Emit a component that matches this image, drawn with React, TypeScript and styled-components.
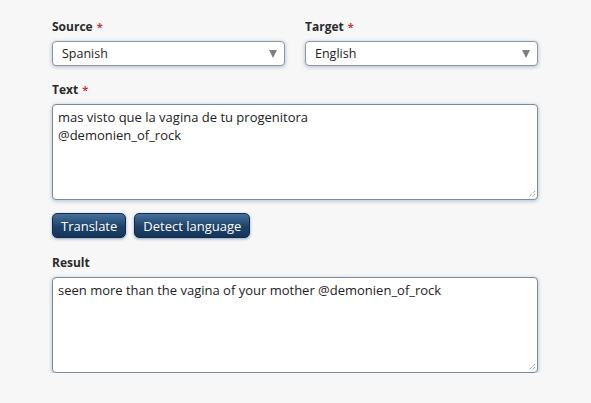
import React from "react";
import styled, { createGlobalStyle } from "styled-components";

const Global = createGlobalStyle`
  html, body { margin: 0; padding: 0; background: #f7f7f7; }
  body { font-family: "Open Sans", "Noto Sans", sans-serif; color: #222; }
`;

const Page = styled.div`
  width: 486px;
  padding: 18px 0 0 52px;
`;

const Row = styled.div`
  display: grid;
  grid-template-columns: 1fr 1fr;
  column-gap: 20px;
`;

const Field = styled.div<{ $mb?: number }>`
  display: flex;
  flex-direction: column;
  margin-bottom: ${(p) => p.$mb ?? 0}px;
`;

const Label = styled.label`
  font-size: 12px;
  font-weight: 700;
  line-height: 17px;
  color: #2a2a2a;
  margin-bottom: 6px;
`;

const Req = styled.span`
  color: #c0393b;
  margin-left: 4px;
  font-size: 11px;
`;

const Select = styled.div`
  position: relative;
  height: 25px;
  box-sizing: border-box;
  border: 1px solid #8a96a3;
  border-radius: 4px;
  background: #fff;
  box-shadow: 0 1px 4px rgba(60, 100, 150, 0.4);
  font-size: 12.5px;
  line-height: 23px;
  padding-left: 9px;
  color: #222;
`;

const Arrow = styled.span`
  position: absolute;
  right: 7px;
  top: 8px;
  width: 0;
  height: 0;
  border-left: 4px solid transparent;
  border-right: 4px solid transparent;
  border-top: 8px solid #7a7f85;
`;

const Area = styled.div<{ $h: number }>`
  position: relative;
  height: ${(p) => p.$h}px;
  box-sizing: border-box;
  border: 1px solid #7d8a97;
  border-radius: 4px;
  background: #fff;
  box-shadow: 0 1px 4px rgba(60, 100, 150, 0.4);
  font-size: 13px;
  line-height: 18px;
  padding: 3px 5px;
  color: #222;
  white-space: pre-wrap;
`;

const Grip = styled.svg`
  position: absolute;
  right: 1px;
  bottom: 1px;
`;

const Buttons = styled.div`
  display: flex;
  gap: 8px;
  margin: 13px 0 16px;
`;

const Button = styled.button`
  height: 25px;
  box-sizing: border-box;
  padding: 0 8px;
  border: 1px solid #102c4a;
  border-radius: 5px;
  background: linear-gradient(#46709a, #1d426a 55%, #14355a);
  color: #fff;
  font-family: "Open Sans", "Noto Sans", sans-serif;
  font-size: 13px;
  box-shadow: 0 1px 3px rgba(40, 80, 130, 0.5);
  cursor: pointer;
`;

const ResizeGrip = () => (
  <Grip width="9" height="9" viewBox="0 0 9 9">
    <path d="M8 2 L2 8 M8 5 L5 8" stroke="#777" strokeWidth="1" strokeDasharray="1 1" />
  </Grip>
);

export default function App() {
  return (
    <>
      <Global />
      <Page>
        <Row>
          <Field $mb={15}>
            <Label>
              Source<Req>*</Req>
            </Label>
            <Select>
              Spanish
              <Arrow />
            </Select>
          </Field>
          <Field $mb={15}>
            <Label>
              Target<Req>*</Req>
            </Label>
            <Select>
              English
              <Arrow />
            </Select>
          </Field>
        </Row>
        <Field>
          <Label>
            Text<Req>*</Req>
          </Label>
          <Area $h={96}>
            {"mas visto que la vagina de tu progenitora\n@demonien_of_rock"}
            <ResizeGrip />
          </Area>
        </Field>
        <Buttons>
          <Button>Translate</Button>
          <Button>Detect language</Button>
        </Buttons>
        <Field>
          <Label>Result</Label>
          <Area $h={96}>
            {"seen more than the vagina of your mother @demonien_of_rock"}
            <ResizeGrip />
          </Area>
        </Field>
      </Page>
    </>
  );
}
